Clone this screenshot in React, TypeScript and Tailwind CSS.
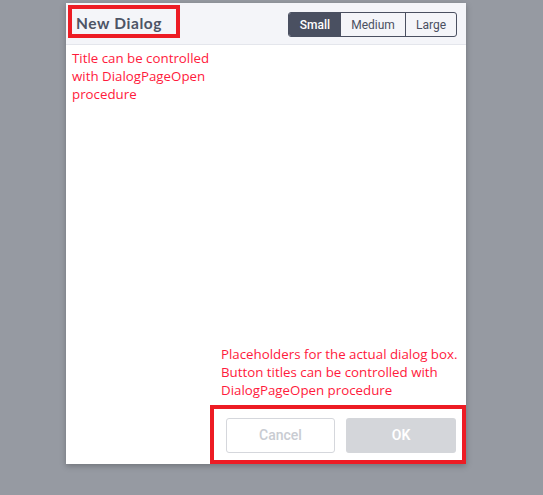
import React from 'react';

const sizes = ['Small', 'Medium', 'Large'];

export default function App() {
  return (
    <div className="w-[543px] h-[495px] bg-[#969aa2] overflow-hidden pl-[66px] pt-[3px]">
      <div className="relative w-[400px] h-[461px] bg-white flex flex-col shadow-[0_2px_6px_rgba(0,0,0,0.25)]">
        {/* header */}
        <div className="h-[42px] bg-[#f4f5f9] border-b border-[#e4e6ec] flex items-center justify-between pl-[10px] pr-[9px]">
          <span className="text-[15.5px] text-[#4d5466] tracking-[0.6px]" style={{ fontFamily: 'Lato, "Open Sans", sans-serif', fontWeight: 700 }}>
            New Dialog
          </span>
          <div className="flex h-[25px] rounded-[3px] border border-[#4a5061] overflow-hidden mt-[2px]" style={{ fontFamily: 'Roboto, sans-serif' }}>
            {sizes.map((s, i) => (
              <div
                key={s}
                className={
                  i === 0
                    ? 'w-[52px] flex items-center justify-center bg-[#4a5061] text-white text-[12px] font-medium'
                    : i === 1
                    ? 'w-[65px] flex items-center justify-center text-[#4a5061] text-[12px] border-r border-[#4a5061]'
                    : 'w-[50px] flex items-center justify-center text-[#4a5061] text-[12px]'
                }
              >
                {s}
              </div>
            ))}
          </div>
        </div>

        {/* body */}
        <div className="flex-1 flex flex-col justify-between text-[13.3px] leading-[18px] text-[#ff1a3c]" style={{ fontFamily: '"Open Sans", "Noto Sans", sans-serif' }}>
          <p className="pl-[6px] pt-[4px] w-[160px]">
            Title can be controlled with DialogPageOpen procedure
          </p>
          <p className="pl-[155px] pb-[7px] w-[400px]">
            Placeholders for the actual dialog box.<br />
            Button titles can be controlled with<br />
            DialogPageOpen procedure
          </p>
        </div>

        {/* footer */}
        <div className="h-[58px] flex items-center justify-end gap-[11px] pr-[10px]" style={{ fontFamily: 'Roboto, sans-serif' }}>
          <button className="w-[109px] h-[35px] rounded-[3px] border border-[#d5d7dc] bg-white text-[#c9ccd2] text-[14px] font-medium">
            Cancel
          </button>
          <button className="w-[110px] h-[35px] rounded-[3px] bg-[#d4d6da] text-white text-[14px] font-semibold">
            OK
          </button>
        </div>

        {/* annotation boxes */}
        <div className="absolute left-[2px] top-[2px] w-[112px] h-[33px] border-[4px] border-[#ed1c24]" />
        <div className="absolute left-[144px] top-[402px] w-[256px] h-[59px] border-[4px] border-[#ed1c24]" />
      </div>
    </div>
  );
}
